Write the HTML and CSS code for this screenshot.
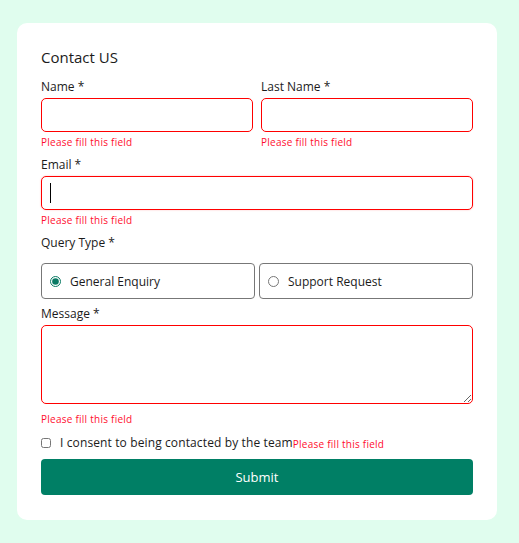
FILE: index.html
```html
<!DOCTYPE html>
<html lang="en">
<head>
<meta charset="utf-8">
<title>Contact US</title>
<link rel="stylesheet" href="styles.css">
</head>
<body>
<form class="card">
  <h1 class="title">Contact US</h1>
  <div class="row-2">
    <div class="field">
      <label class="label">Name *</label>
      <input class="input invalid" type="text">
      <span class="error">Please fill this field</span>
    </div>
    <div class="field">
      <label class="label">Last Name *</label>
      <input class="input invalid" type="text">
      <span class="error">Please fill this field</span>
    </div>
  </div>
  <div class="field field-gap">
    <label class="label">Email *</label>
    <div class="input-wrap">
      <input class="input invalid focused" type="email">
      <span class="caret"></span>
    </div>
    <span class="error">Please fill this field</span>
  </div>
  <div class="field field-gap">
    <label class="label">Query Type *</label>
    <div class="radios">
      <label class="radio-box"><input class="radio" type="radio" name="q" checked><span>General Enquiry</span></label>
      <label class="radio-box"><input class="radio" type="radio" name="q"><span>Support Request</span></label>
    </div>
  </div>
  <div class="field message-field">
    <label class="label">Message *</label>
    <textarea class="textarea invalid"></textarea>
    <span class="error error-msg">Please fill this field</span>
  </div>
  <div class="consent">
    <input class="checkbox" type="checkbox">
    <span class="consent-text">I consent to being contacted by the team</span><span class="error-inline">Please fill this field</span>
  </div>
  <button class="submit" type="button">Submit</button>
</form>
</body>
</html>
```

FILE: styles.css
```css
* { box-sizing: border-box; }
html, body { margin: 0; padding: 0; }
body {
  background: #e0fdee;
  font-family: "Open Sans", "Liberation Sans", sans-serif;
  color: #1b1b1b;
  width: 519px;
  height: 543px;
  overflow: hidden;
}
.card {
  margin: 23px 0 0 17px;
  width: 480px;
  background: #ffffff;
  border-radius: 10px;
  padding: 24px 24px 25px;
  display: flex;
  flex-direction: column;
}
.title {
  margin: 0;
  font-size: 15px;
  line-height: 20px;
  font-weight: 400;
}
.row-2 {
  margin-top: 12px;
  display: grid;
  grid-template-columns: 1fr 1fr;
  column-gap: 8px;
}
.field { display: flex; flex-direction: column; }
.field-gap { margin-top: 8px; }
.label {
  font-size: 12px;
  line-height: 16px;
  margin-bottom: 3px;
}
.input {
  display: block;
  width: 100%;
  height: 34px;
  border: 1px solid #ff0000;
  border-radius: 5px;
  outline: none;
  font: inherit;
  padding: 0 10px;
}
.input-wrap { position: relative; }
.focused { box-shadow: 0 0 2px rgba(255,0,0,0.25); }
.caret {
  position: absolute;
  left: 9px;
  top: 7px;
  width: 1px;
  height: 20px;
  background: #000;
}
.error {
  margin-top: 3px;
  font-size: 10px;
  letter-spacing: 0.25px;
  line-height: 14px;
  color: #ff0d2e;
}
.radios {
  margin-top: 9px;
  display: grid;
  grid-template-columns: 1fr 1fr;
  column-gap: 4px;
}
.radio-box {
  height: 36px;
  border: 1px solid #777777;
  border-radius: 4px;
  display: flex;
  align-items: center;
  padding-left: 8px;
  font-size: 12px;
}
.radio {
  margin: 0 9px 0 0;
  width: 11px;
  height: 11px;
  accent-color: #0a7a64;
}
.message-field { margin-top: 7px; }
.textarea {
  display: block;
  width: 100%;
  height: 79px;
  border: 1px solid #ff0000;
  border-radius: 5px;
  outline: none;
  resize: vertical;
  font: inherit;
}
.error-msg { margin-top: 8px; }
.consent {
  margin-top: 9px;
  display: flex;
  align-items: center;
  height: 16px;
}
.checkbox {
  margin: 0 9px 0 0;
  width: 10px;
  height: 10px;
}
.consent-text {
  font-size: 12px;
  letter-spacing: 0.12px;
  line-height: 16px;
}
.error-inline {
  font-size: 10px;
  letter-spacing: 0.25px;
  line-height: 16px;
  color: #ff0d2e;
  padding-top: 2px;
}
.submit {
  margin-top: 8px;
  height: 36px;
  width: 100%;
  border: none;
  border-radius: 4px;
  background: #007f65;
  color: #ffffff;
  font: inherit;
  font-size: 13px;
}
```
